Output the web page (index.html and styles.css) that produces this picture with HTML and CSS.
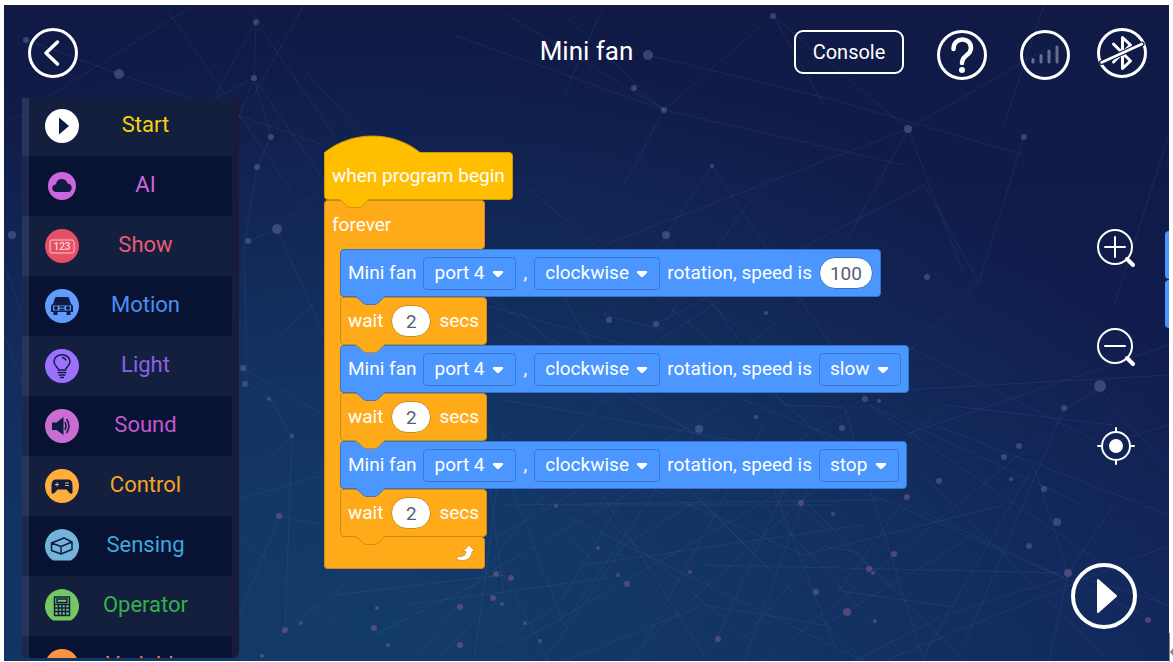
FILE: index.html
```html
<!DOCTYPE html>
<html lang="en">
<head>
<meta charset="utf-8">
<title>Mini fan</title>
<link rel="stylesheet" href="styles.css">
</head>
<body>
<svg class="defs" width="0" height="0" aria-hidden="true">
  <symbol id="tab" viewBox="0 0 32 9">
    <path class="tab-fill" d="M0 0 C3 0 5 2 7 4 L9 6 C11 8 12 8 14 8 H21 C23 8 24 8 26 6 L28 4 C30 2 31 1 32 0 Z"/>
    <path class="tab-edge" d="M0 .5 C3 .5 5 2 7 4 L9 6 C11 8 12 8.500 14 8.500 H21 C23 8.500 24 8 26 6 L28 4 C30 2 31 .5 32 .5"/>
  </symbol>
  <symbol id="caret" viewBox="0 0 12 8"><path d="M2 1 H10 C11.500 1 11.500 2.500 10.600 3.300 L7 6.700 Q6 7.500 5 6.700 L1.400 3.300 C.5 2.500 .5 1 2 1Z" fill="#fff"/></symbol>
</svg>
<div class="app">
  <svg class="network" viewBox="0 0 1165 656" preserveAspectRatio="xMidYMid slice" aria-hidden="true">
    <g class="web">
      <path d="M252 17 L250 73 L267 132 L253 162 L240 240 L243 368 M252 17 L200 110 M252 17 L330 130 M250 73 L160 120 M250 73 L330 190 M250 73 L190 230 M22 35 L115 69 L320 140 M0 120 L190 0 M160 0 L290 190 M240 0 L360 130 M300 0 L250 90 M0 260 L60 420 M0 330 L20 380"/>
      <path d="M273 224 L243 237 M273 224 L320 180 M273 224 L320 330 M239 363 L243 378 L266 394 L288 431 M239 363 L320 410 M239 363 L320 290 M288 431 L236 480 M236 494 L320 470 M275 511 L236 610 M275 511 L320 520 M281 625 L258 651 M281 625 L340 580 M288 431 L281 625 M236 530 L330 620"/>
      <path d="M500 8 L660 105 L900 160 M550 0 L660 105 L769 11 L820 100 M630 83 L660 105 L620 180 M644 50 L830 95 L1020 150 M450 30 L660 105 M600 0 L560 90 M769 11 L904 124 L960 270 M904 124 L1040 45 M904 124 L840 240"/>
      <path d="M708 161 L662 230 L600 310 L656 324 L750 190 M662 230 L780 400 L840 402 M708 161 L860 390 M520 180 L830 440 M420 250 L690 428 M510 300 L760 560 M650 320 L920 180 L975 277 L1020 132 M904 124 L600 240 M975 277 L850 402 L620 540"/>
      <path d="M495 320 L690 428 L880 495 L1060 573 M480 410 L560 620 L690 428 M500 430 L745 635 M500 500 L880 495 M560 430 L700 650 M620 490 L555 600 L490 640 M620 540 L540 656 M760 420 L630 656 M820 440 L740 656 M840 402 L920 656 M865 400 L1080 500 M865 400 L1160 600"/>
      <path d="M900 430 L1165 340 M900 385 L1165 370 M1095 383 L1059 406 L960 640 M1095 383 L1165 465 M1110 300 L1165 130 M930 420 L1165 510 M920 470 L1100 650 M904 500 L1140 610 M1064 568 L1030 460 L920 650 M1064 568 L1165 600 M1060 573 L940 610 L850 656 M700 560 L1064 568 M40 570 L90 656 M900 650 L760 500 M1040 0 L1000 120 M560 510 L860 656 M480 540 L720 400 M510 640 L790 480"/>
      <path d="M560 500 L830 500 L940 400 L1110 420 M480 570 L640 480 L800 550 L1000 500 M560 656 L700 600 L820 620 L970 530 M580 560 L860 520 M620 656 L860 440 M760 656 L1040 430 M680 480 L860 656"/>
      <path d="M480 440 L500 590 L430 656 M500 430 L470 656 M540 490 L410 656 M604 573 L400 600 M500 460 L604 573 M492 569 L370 630 M545 656 L500 570 L330 590 M770 485 L830 640 M775 485 L900 590 M780 485 L710 640 M790 485 L960 656 M903 491 L835 586 L951 602 M857 548 L820 541 L741 631 M1045 656 L1064 568 L1110 500 M880 656 L1165 540 M900 340 L1100 440 L1165 420 M480 300 L640 345 L720 293 M560 293 L590 345 M700 293 L760 345 M800 293 L740 345 M500 395 L760 440 M600 395 L560 440 M740 395 L850 440"/>
    </g>
    <g class="nodes">
      <circle cx="22" cy="35" r="3"/><circle cx="115" cy="69" r="5"/><circle cx="252" cy="17" r="3"/><circle cx="250" cy="73" r="3"/><circle cx="267" cy="132" r="3"/><circle cx="253" cy="162" r="3"/><circle cx="273" cy="224" r="5"/><circle cx="244" cy="236" r="3"/><circle cx="239" cy="363" r="3"/><circle cx="241" cy="379" r="3"/><circle cx="265" cy="394" r="2"/><circle cx="288" cy="431" r="2"/>
      <circle cx="644" cy="50" r="5"/><circle cx="630" cy="83" r="3"/><circle cx="660" cy="105" r="3"/><circle cx="769" cy="11" r="3"/><circle cx="904" cy="124" r="4"/><circle cx="1020" cy="132" r="3"/><circle cx="708" cy="161" r="2"/><circle cx="662" cy="230" r="4"/><circle cx="605" cy="315" r="3"/><circle cx="652" cy="319" r="3"/><circle cx="762" cy="308" r="2"/><circle cx="923" cy="272" r="3"/><circle cx="1096" cy="381" r="6"/><circle cx="1060" cy="403" r="3"/><circle cx="861" cy="394" r="3"/><circle cx="875" cy="396" r="2"/><circle cx="695" cy="424" r="4"/><circle cx="752" cy="412" r="2"/><circle cx="838" cy="423" r="3"/><circle cx="19" cy="378" r="2"/><circle cx="8" cy="230" r="4"/>
      <circle cx="1015" cy="441" r="3"/><circle cx="1000" cy="452" r="3"/><circle cx="1007" cy="474" r="2"/><circle cx="1040" cy="484" r="3"/><circle cx="1053" cy="517" r="4"/><circle cx="1025" cy="541" r="3"/><circle cx="935" cy="476" r="3"/>
    </g>
    <g class="nodes warm">
      <circle cx="275" cy="511" r="3"/><circle cx="281" cy="625" r="3"/><circle cx="258" cy="651" r="2"/><circle cx="297" cy="618" r="2"/><circle cx="370" cy="623" r="3"/><circle cx="373" cy="603" r="2"/><circle cx="384" cy="640" r="2"/><circle cx="552" cy="501" r="2"/><circle cx="594" cy="543" r="2"/><circle cx="614" cy="570" r="2"/><circle cx="623" cy="579" r="3"/><circle cx="492" cy="569" r="3"/><circle cx="507" cy="573" r="3"/><circle cx="456" cy="602" r="3"/><circle cx="489" cy="593" r="3"/><circle cx="498" cy="599" r="2"/><circle cx="521" cy="618" r="2"/><circle cx="456" cy="640" r="3"/><circle cx="536" cy="636" r="2"/><circle cx="686" cy="567" r="2"/><circle cx="797" cy="498" r="3"/><circle cx="829" cy="509" r="2"/><circle cx="865" cy="564" r="3"/><circle cx="812" cy="587" r="3"/><circle cx="903" cy="492" r="3"/><circle cx="890" cy="549" r="3"/><circle cx="869" cy="568" r="2"/><circle cx="1064" cy="568" r="4"/><circle cx="1144" cy="615" r="3"/><circle cx="843" cy="607" r="4"/><circle cx="871" cy="616" r="2"/><circle cx="714" cy="634" r="3"/>
    </g>
  </svg>

  <header class="topbar">
    <button class="round back" aria-label="Back"><svg viewBox="0 0 50 50"><circle cx="25" cy="25" r="23.500"/><path d="M29.500 14 L18 25 L29.500 36" stroke-width="3.500"/></svg></button>
    <h1>Mini fan</h1>
    <div class="actions">
      <button class="console">Console</button>
      <button class="round help" aria-label="Help"><svg viewBox="0 0 50 50"><circle cx="25" cy="25" r="23.500"/><path d="M16.500 19 C16.500 6.500 34 6.500 34 18 C34 26 25 24.500 25 33" stroke-width="4.500"/><circle cx="25" cy="40" r="3" class="solid"/></svg></button>
      <button class="round signal" aria-label="Signal strength"><svg viewBox="0 0 50 50"><circle cx="25" cy="25" r="23.500"/><path class="dim" d="M13 29.500 V32 M21 25.500 V32 M29 21 V32 M37 17 V32"/></svg></button>
      <button class="round bluetooth" aria-label="Bluetooth off"><svg viewBox="0 0 50 50"><circle cx="25" cy="25" r="23.500"/><path d="M16.500 16 L33.500 33 L25.500 40.500 V9.500 L33.500 17 L16.500 34" stroke-width="3"/><path d="M4.500 34.500 L45 16" stroke="#111b47" stroke-width="5"/><path d="M4.500 34.500 L45 16" stroke-width="2.500"/></svg></button>
    </div>
  </header>

  <main class="workspace">
    <nav class="sidebar" aria-label="Block categories">
      <ul>
        <li><a href="#start" class="start"><svg viewBox="0 0 34 34"><circle cx="17" cy="17" r="17"/><path class="ink" d="M14 8.500 L24 17 L14 25.500Z"/></svg><span>Start</span></a></li>
        <li><a href="#ai" class="ai"><svg viewBox="0 0 34 34"><circle cx="17" cy="17" r="14"/><path class="ink" d="M11 23 C5 22 7 15 11 15.500 C12 8.500 21 8.500 22.500 14.500 C28 14.500 28 22.500 23.500 23Z"/></svg><span>AI</span></a></li>
        <li><a href="#show" class="show"><svg viewBox="0 0 34 34"><circle cx="17" cy="17" r="17"/><rect x="5" y="11" width="24" height="13" rx="2" fill="none" stroke="#ffc4c9" stroke-width="1"/><text x="17" y="21">123</text></svg><span>Show</span></a></li>
        <li><a href="#motion" class="motion"><svg viewBox="0 0 34 34"><circle cx="17" cy="17" r="17"/><path class="ink" fill-rule="evenodd" d="M10 9 Q10.300 8 11.500 8 H22.500 Q23.700 8 24 9 L26 15 Q28 15.500 28 17.500 V23 H25.500 V26 H21.500 V23 H12.500 V26 H8.500 V23 H6 V17.500 Q6 15.500 8 15Z M8 16.500 V21.500 H26 V16.500Z"/><circle class="ink" cx="11" cy="19" r="2"/><circle class="ink" cx="23" cy="19" r="2"/><path class="line" d="M14.500 18 H19.500 M14.500 20.500 H19.500"/></svg><span>Motion</span></a></li>
        <li><a href="#light" class="light"><svg viewBox="0 0 34 34"><circle cx="17" cy="17" r="17"/><path class="line" d="M13.500 21 C13.500 18.500 9 17 9 12.500 C9.500 3.500 24.500 3.500 25 12.500 C25 17 20.500 18.500 20.500 21Z M17 8.500 Q20 8.500 21 11.500 M12.500 23.500 H21.500 M13.500 26 H20.500 M15 28.500 H19"/></svg><span>Light</span></a></li>
        <li><a href="#sound" class="sound"><svg viewBox="0 0 34 34"><circle cx="17" cy="17" r="17"/><path class="ink" d="M7 13.500 H11.500 L18.500 8 V26 L11.500 21 H7Z"/><path class="line" d="M20 13 Q22 17 20 21 M21.500 10 Q26.500 17 21.500 24"/></svg><span>Sound</span></a></li>
        <li><a href="#control" class="control"><svg viewBox="0 0 34 34"><circle cx="17" cy="17" r="17"/><path class="ink" d="M10.500 10.500 H23.500 Q27.500 10.500 27.500 17 V23 Q27.500 26 24.500 24 L21.500 20.500 H12.500 L9.500 24 Q6.500 26 6.500 23 V17 Q6.500 10.500 10.500 10.500Z"/><path d="M10 15.500 H14 M12 13.500 V17.500 M20 14 H24 M20 16.500 H24" stroke="#ffae3c" stroke-width="1" fill="none"/></svg><span>Control</span></a></li>
        <li><a href="#sensing" class="sensing"><svg viewBox="0 0 34 34"><path d="M8 31.500 A17 17 0 1 1 26 31.500Z"/><path class="line" d="M6.500 14 L19 9 L27 13 V20.500 L16 25 L6.500 21.500Z M6.500 14 L16 17.500 L27 13 M16 17.500 V25"/></svg><span>Sensing</span></a></li>
        <li><a href="#operator" class="operator"><svg viewBox="0 0 34 34"><path d="M8 31.500 A17 17 0 1 1 26 31.500Z"/><path class="line" d="M9.500 8 H24.500 V26.500 H9.500Z M12 10 H22 V13.500 H12Z M9.500 15.500 H24.500 M9.500 19 H24.500 M9.500 22.500 H24.500 M13.500 15.500 V26.500 M17 15.500 V26.500 M20.500 15.500 V26.500"/></svg><span>Operator</span></a></li>
        <li><a href="#variable" class="variable"><svg viewBox="0 0 34 34"><circle cx="17" cy="17" r="17"/></svg><span>Variable</span></a></li>
      </ul>
    </nav>

    <section class="canvas" aria-label="Program">
      <div class="script">
        <div class="block hat">
          <svg class="dome" viewBox="0 0 97 18" aria-hidden="true"><path d="M.5 18 V17 C28 -5 69 -5 96 17 L97 18Z" fill="#ffbf00"/><path d="M.5 17 C28 -5 69 -5 96 17" fill="none" stroke="#cc9900"/></svg>
          <span>when program begin</span>
          <svg class="tab"><use href="#tab"/></svg>
        </div>
        <div class="loop">
          <div class="loop-head">forever</div>
          <div class="loop-body">
            <div class="block motor"><span>Mini fan</span><label class="pick"><select aria-label="Port"><option>port 4</option></select><svg><use href="#caret"/></svg></label><span>,</span><label class="pick"><select aria-label="Direction"><option>clockwise</option></select><svg><use href="#caret"/></svg></label><span>rotation, speed is</span><input class="wide" aria-label="Speed" value="100"><svg class="tab"><use href="#tab"/></svg></div>
            <div class="block wait"><span>wait</span><input aria-label="Seconds" value="2"><span>secs</span><svg class="tab"><use href="#tab"/></svg></div>
            <div class="block motor"><span>Mini fan</span><label class="pick"><select aria-label="Port"><option>port 4</option></select><svg><use href="#caret"/></svg></label><span>,</span><label class="pick"><select aria-label="Direction"><option>clockwise</option></select><svg><use href="#caret"/></svg></label><span>rotation, speed is</span><label class="pick"><select aria-label="Speed"><option>slow</option></select><svg><use href="#caret"/></svg></label><svg class="tab"><use href="#tab"/></svg></div>
            <div class="block wait"><span>wait</span><input aria-label="Seconds" value="2"><span>secs</span><svg class="tab"><use href="#tab"/></svg></div>
            <div class="block motor"><span>Mini fan</span><label class="pick"><select aria-label="Port"><option>port 4</option></select><svg><use href="#caret"/></svg></label><span>,</span><label class="pick"><select aria-label="Direction"><option>clockwise</option></select><svg><use href="#caret"/></svg></label><span>rotation, speed is</span><label class="pick"><select aria-label="Speed"><option>stop</option></select><svg><use href="#caret"/></svg></label><svg class="tab"><use href="#tab"/></svg></div>
            <div class="block wait"><span>wait</span><input aria-label="Seconds" value="2"><span>secs</span><svg class="tab"><use href="#tab"/></svg></div>
          </div>
          <div class="loop-foot"><svg viewBox="0 0 20 18" aria-hidden="true"><path d="M13 1 L19 7.500 H16 C16 14 10 18 2.500 16 C.5 15.500 .5 12.500 2.500 12.500 C8 12.500 10 11 10 7.500 H7Z" fill="#fff" stroke="#cf8b17" stroke-width=".8" stroke-linejoin="round"/></svg></div>
        </div>
      </div>
    </section>

    <aside class="tools">
      <button aria-label="Zoom in"><svg viewBox="0 0 40 40"><circle cx="19" cy="19" r="17"/><path d="M9 19 H29 M19 9 V29"/><path class="handle" d="M31 31 L37 37"/></svg></button>
      <button aria-label="Zoom out"><svg viewBox="0 0 40 40"><circle cx="19" cy="19" r="17"/><path d="M9 19 H29"/><path class="handle" d="M31 31 L37 37"/></svg></button>
      <button aria-label="Center"><svg viewBox="0 0 40 40"><circle cx="20" cy="20" r="14"/><path d="M20 2 V6 M20 34 V38 M2 20 H6 M34 20 H38"/><circle class="solid" cx="20" cy="20" r="6"/></svg></button>
      <button class="run" aria-label="Run"><svg viewBox="0 0 66 66"><circle cx="33" cy="33" r="31" stroke-width="4"/><path class="solid" d="M27 17 L45 33 L27 49Z" stroke-linejoin="round"/></svg></button>
    </aside>
    <div class="offscreen"><i></i><i></i></div>
  </main>
</div>
<div class="edge-mark" aria-hidden="true"><svg viewBox="0 0 3 8"><path d="M0 4 L3 0 V8Z" fill="#888"/></svg></div>
</body>
</html>
```
FILE: styles.css
```css
* { box-sizing: border-box; }
body { position: relative; margin: 0; padding: 5px 4px 1px; height: 100vh; background: #fff; font-family: Roboto, "Liberation Sans", sans-serif; color: #fff; }
button, select, input { font: inherit; color: inherit; margin: 0; }
button { background: none; border: 0; padding: 0; cursor: pointer; }
svg { display: block; }
.defs { position: absolute; }
.app {
  position: relative; height: 100%; overflow: hidden; display: flex; flex-direction: column;
  background:
    radial-gradient(ellipse 75% 90% at 32% 95%, #133b6a 0%, rgba(19, 57, 104, .8) 40%, rgba(18, 44, 96, 0) 100%),
    linear-gradient(180deg, #101a45 0%, #111c4c 45%, #12265c 100%);
}
.network { position: absolute; inset: 0; width: 100%; height: 100%; }
.web { fill: none; stroke: #6680c0; stroke-opacity: .14; stroke-width: 1; }
.nodes { fill: #6f7ab0; fill-opacity: .42; }
.warm { fill: #8d5f8e; fill-opacity: .5; }

.topbar { position: relative; display: flex; justify-content: space-between; align-items: flex-start; height: 93px; padding: 23px 22px 0 24px; }
.topbar h1 { position: absolute; left: 0; right: 0; top: 30px; margin: 0; text-align: center; font-size: 26px; line-height: 32px; font-weight: 400; pointer-events: none; }
.round svg { width: 50px; height: 50px; fill: none; stroke: #fff; stroke-width: 3; stroke-linecap: round; stroke-linejoin: round; }
.solid { fill: #fff; }
.round .solid { stroke: none; }
.round .dim { stroke: #666d91; }
.actions { display: flex; align-items: flex-start; }
.console { height: 44px; width: 110px; margin: 2px 33px 0 0; border: 2px solid #fff; border-radius: 9px; font-size: 20px; line-height: 24px; }
.help { margin: 2px 33px 0 0; }
.signal { margin: 2px 27px 0 0; }

.workspace { position: relative; flex: 1; min-height: 0; display: flex; }
.sidebar { width: 217px; margin: 0 0 3px 18px; overflow: hidden; border-radius: 0 0 6px 6px; background: #1a1a3b; flex: none; }
.sidebar ul { list-style: none; margin: -2px 7px 0 0; padding: 0; }
.sidebar li { height: 60px; background: #081334; border-left: 7px solid #1d284d; }
.sidebar li:nth-child(odd) { background: #141f3e; border-left-color: #29345a; }
.sidebar a { display: flex; align-items: center; height: 100%; padding-left: 16px; text-decoration: none; font-size: 22px; line-height: 26px; color: var(--tone); }
.sidebar a svg { width: 34px; height: 34px; fill: var(--badge, var(--tone)); flex: none; }
.sidebar a span { flex: 1; text-align: center; padding: 0 36px 2px 16px; }
.sidebar .ink { fill: #101b43; }
.sidebar .line { fill: none; stroke: #101b43; stroke-width: 1.5; stroke-linejoin: round; }
.sidebar text { font-size: 10px; font-weight: 500; text-anchor: middle; fill: #ffd5d8; }
.start { --tone: #f5d20a; --badge: #fff; }
.ai { --tone: #cd66dc; }
.show { --tone: #e65c75; --badge: #e65064; }
.motion { --tone: #4c8ff0; --badge: #629bfb; }
.light { --tone: #8663e8; --badge: #9b72ff; }
.sound { --tone: #c458ce; --badge: #c96dd3; }
.control { --tone: #f5a623; --badge: #ffae3c; }
.sensing { --tone: #3da9d8; --badge: #72b4da; }
.operator { --tone: #33b24a; --badge: #75c766; }
.variable { --tone: #e8823c; --badge: #ff9142; }

.canvas { flex: 1; min-width: 0; padding: 54px 0 0 85px; }
.script { display: flex; flex-direction: column; align-items: flex-start; font-size: 19px; line-height: 24px; white-space: nowrap; }
.block { position: relative; display: flex; align-items: center; gap: 7px; height: 48px; padding: 0 7px; border: 1px solid var(--edge); border-radius: 4px; background: var(--fill); color: #fff; }
.hat { --fill: #ffbf00; --edge: #cc9900; border-top-left-radius: 0; }
.motor { --fill: #4c97ff; --edge: #3373cc; }
.wait, .loop { --fill: #ffab19; --edge: #cf8b17; }
.wait { gap: 8px; }
.dome { position: absolute; left: -1px; top: -18px; width: 97px; height: 19px; }
.tab { position: absolute; left: 12px; bottom: -9px; width: 32px; height: 9px; z-index: 2; }
.tab-fill { fill: var(--fill); }
.tab-edge { fill: none; stroke: var(--edge); }
.loop-head { width: 161px; height: 49px; padding: 12px 7px; background: var(--fill); border: 1px solid var(--edge); border-bottom: 0; border-radius: 4px 4px 4px 0; }
.loop-body { display: flex; flex-direction: column; align-items: flex-start; padding-left: 15px; border-left: 1px solid var(--edge); background: linear-gradient(90deg, #ffab19 18px, transparent 18px); }
.loop-foot { width: 161px; height: 32px; padding: 7px 8px 0; display: flex; justify-content: flex-end; background: var(--fill); border: 1px solid var(--edge); border-top: 0; border-radius: 0 4px 4px 4px; }
.loop-foot svg { width: 20px; height: 18px; }
.pick { position: relative; display: block; }
.pick select { display: block; appearance: none; height: 33px; padding: 0 30px 0 10px; border: 1px solid #3579d8; border-radius: 4px; background: #4c97ff; line-height: 24px; }
.pick svg { position: absolute; right: 12px; top: 13px; width: 12px; height: 8px; pointer-events: none; }
.block input { width: 40px; height: 32px; padding: 0; border: 1px solid var(--edge); border-radius: 16px; background: #fff; color: #575e75; text-align: center; }
.block input.wide { width: 54px; }

.tools { width: 66px; margin-right: 32px; display: flex; flex-direction: column; align-items: center; padding-top: 130px; }
.tools button { margin: 0 0 59px 24px; }
.tools svg { width: 40px; height: 40px; fill: none; stroke: #fff; stroke-width: 2; stroke-linecap: round; }
.tools .handle { stroke-width: 4; }
.tools .solid { fill: #fff; }
.tools .run { margin: auto 0 32px; }
.tools .run svg { width: 66px; height: 66px; }
.offscreen { position: absolute; right: 0; top: 133px; }
.offscreen i { display: block; width: 4px; height: 48px; margin-bottom: 1px; background: #4c97ff; border-radius: 4px 0 0 4px; }
.edge-mark { position: absolute; right: 0; bottom: 0; width: 4px; height: 29px; padding-top: 15px; border-left: 1px solid #888; }
.edge-mark svg { width: 3px; height: 8px; }
```
